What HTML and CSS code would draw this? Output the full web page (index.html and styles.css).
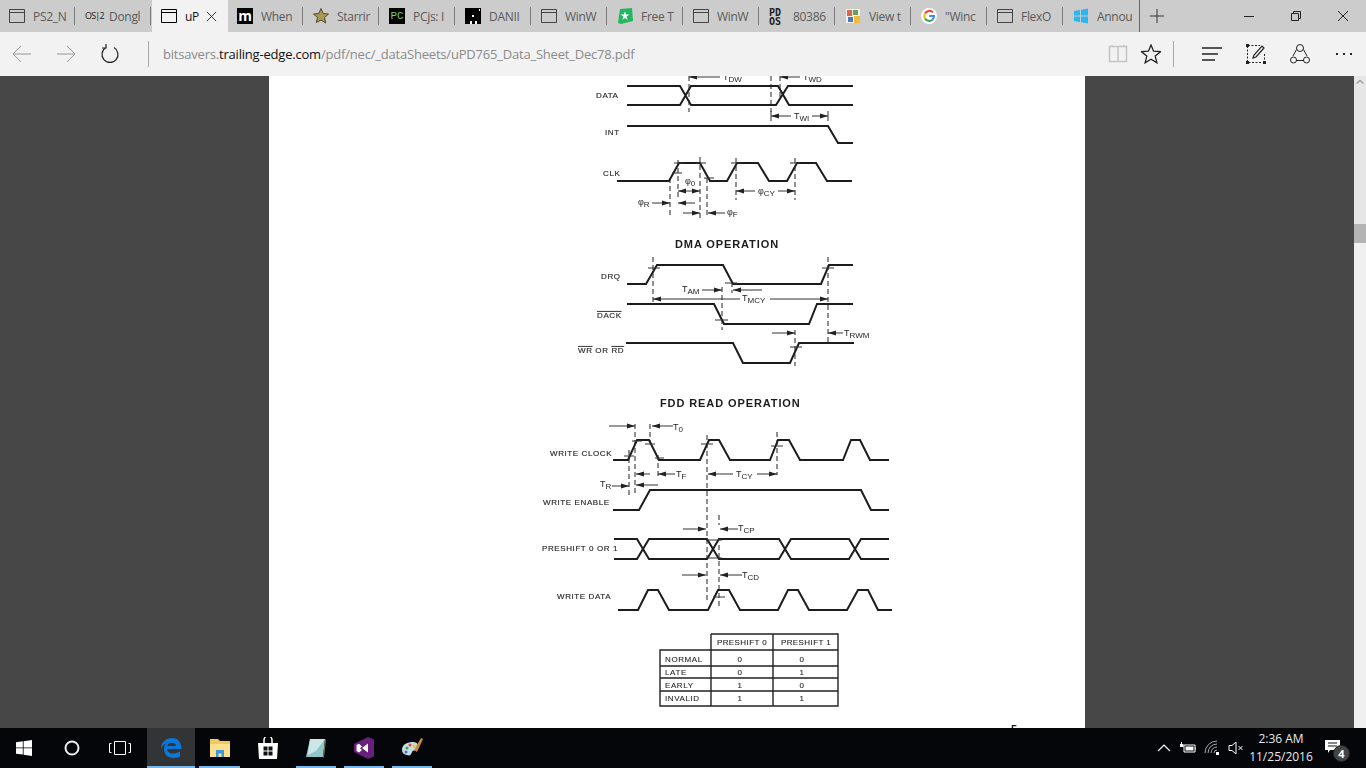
FILE: index.html
```html
<!DOCTYPE html>
<html lang="en">
<head>
  <meta charset="UTF-8" />
  <title>uPD765 Data Sheet</title>
  <link rel="stylesheet" href="styles.css">
</head>
<body>
  <svg class="sprites" width="0" height="0">
    <defs>
      <symbol id="win-icon" viewBox="0 0 16 16">
        <path d="M.5 1.500h15v13H.5zM.5 4.500h15" fill="none" stroke="currentColor" />
      </symbol>
      <marker id="head" viewBox="0 0 8 6" markerWidth="8" markerHeight="6" refX="8" refY="3" orient="auto-start-reverse" markerUnits="userSpaceOnUse">
        <path d="M0 .5L8 3L0 5.500z" fill="#222" />
      </marker>
    </defs>
  </svg>

  <div class="tabbar">
    <div class="tab"><svg class="tab-icon"><use href="#win-icon" /></svg><span class="tab-title">PS2_N</span></div>
    <div class="tab"><span class="tab-icon os2">OS|2</span><span class="tab-title">Dongl</span></div>
    <div class="tab active"><svg class="tab-icon"><use href="#win-icon" /></svg><span class="tab-title short">uP</span>
      <svg class="tab-close" viewBox="0 0 12 12"><path d="M1 1l10 10M11 1L1 11" stroke="#222" fill="none" /></svg>
    </div>
    <div class="tab"><span class="tab-icon mbox">m</span><span class="tab-title">When</span></div>
    <div class="tab">
      <svg class="tab-icon" viewBox="0 0 16 16"><path d="M8 .5l2.200 5 5.300.5-4 3.500 1.200 5.500L8 12l-4.700 2.500L4.500 9.500l-4-3.500 5.300-.5z" fill="#a89a55" stroke="#4d4a30" /></svg>
      <span class="tab-title">Starrir</span>
    </div>
    <div class="tab"><span class="tab-icon pcbox">PC</span><span class="tab-title">PCjs: I</span></div>
    <div class="tab">
      <svg class="tab-icon" viewBox="0 0 16 16"><path d="M0 0h16v16H0z" fill="#000" /><path d="M7 7h2v2H7zM5 13h2v3H5zM10 13h2v3h-2zM14 1h1v2h-1z" fill="#fff" /></svg>
      <span class="tab-title">DANII</span>
    </div>
    <div class="tab"><svg class="tab-icon"><use href="#win-icon" /></svg><span class="tab-title">WinW</span></div>
    <div class="tab">
      <svg class="tab-icon" viewBox="0 0 16 16"><path d="M3 1l12-1 1 13-12 3-3-1z" fill="#24b561" /><path d="M8 3l1 3.500h3.500l-3 2 1.200 3.500L8 10l-2.700 2 1.200-3.500-3-2H7z" fill="#fff" /></svg>
      <span class="tab-title">Free T</span>
    </div>
    <div class="tab"><svg class="tab-icon"><use href="#win-icon" /></svg><span class="tab-title">WinW</span></div>
    <div class="tab"><span class="tab-icon pdos">PD<br>OS</span><span class="tab-title">80386</span></div>
    <div class="tab">
      <svg class="tab-icon" viewBox="0 0 16 16"><path d="M1 1h14v14H1z" fill="#f4f0e6" /><path d="M2 2h5v6H2z" fill="#d9694a" /><path d="M8 2h5v5H8z" fill="#6b9e5b" /><path d="M3 9h5v5H3z" fill="#4c79b8" /><path d="M9 8h6v7H9z" fill="#eebc3c" /></svg>
      <span class="tab-title">View t</span>
    </div>
    <div class="tab">
      <svg class="tab-icon" viewBox="0 0 16 16">
        <circle cx="8" cy="8" r="8" fill="#fff" />
        <path d="M12 4.400A5 5 0 0 0 4 5.500" fill="none" stroke="#ea4335" stroke-width="2" />
        <path d="M4 5.500a5 5 0 0 0 0 5" fill="none" stroke="#fbbc05" stroke-width="2" />
        <path d="M4 10.500a5 5 0 0 0 7.500 1.200" fill="none" stroke="#34a853" stroke-width="2" />
        <path d="M11.500 11.700A5 5 0 0 0 13 8H8.200" fill="none" stroke="#4285f4" stroke-width="2" />
      </svg>
      <span class="tab-title">"Winc</span>
    </div>
    <div class="tab"><svg class="tab-icon"><use href="#win-icon" /></svg><span class="tab-title">FlexO</span></div>
    <div class="tab">
      <svg class="tab-icon" viewBox="0 0 16 16"><path d="M1 3l6-1v5.500H1zM8 1.800L15 .5v7H8zM1 8.500h6V14l-6-1zM8 8.500h7v7l-7-1.300z" fill="#2cb6f0" /></svg>
      <span class="tab-title">Annou</span>
    </div>
    <svg class="new-tab" viewBox="0 0 14 14"><path d="M7 0v14M0 7h14" stroke="#333" fill="none" /></svg>
    <div class="win-controls">
      <svg viewBox="0 0 12 12"><path d="M1 6.500h10" stroke="#222" fill="none" /></svg>
      <svg viewBox="0 0 12 12"><path d="M1.500 3.500h7v7h-7zM3.500 3.500v-2h7v7h-2" stroke="#222" fill="none" /></svg>
      <svg viewBox="0 0 12 12"><path d="M1 1l10 10M11 1L1 11" stroke="#222" fill="none" /></svg>
    </div>
  </div>

  <div class="toolbar">
    <svg class="nav-btn" viewBox="0 0 20 20"><path d="M19 10H1M9 2l-8 8 8 8" stroke="#9a9a9a" fill="none" /></svg>
    <svg class="nav-btn" viewBox="0 0 20 20"><path d="M1 10h18M11 2l8 8-8 8" stroke="#9a9a9a" fill="none" /></svg>
    <svg class="nav-btn" viewBox="0 0 20 20"><path d="M6 3.500a8 8 0 1 0 8 0M6 0v4H2" stroke="#222" stroke-width="1.200" fill="none" /></svg>
    <div class="tool-sep first"></div>
    <div class="url">bitsavers.<b>trailing-edge.com</b>/pdf/nec/_dataSheets/uPD765_Data_Sheet_Dec78.pdf</div>
    <svg class="tool-btn" viewBox="0 0 20 20"><path d="M1.500 2.500h17v15h-17zM10 2.500v15M4 1v1.500M16 1v1.500" stroke="#c4c4c4" stroke-width="1.500" fill="none" /></svg>
    <svg class="tool-btn" viewBox="0 0 20 20"><path d="M10 1l2.600 6.200 6.900.5-5.300 4.400 1.700 6.700L10 15.200l-5.900 3.600 1.700-6.700L.5 7.700l6.900-.5z" stroke="#222" stroke-width="1.300" fill="none" /></svg>
    <div class="tool-sep"></div>
    <svg class="tool-btn" viewBox="0 0 20 20"><path d="M0 4h20M0 10h16M0 16h13" stroke="#222" stroke-width="1.400" fill="none" /></svg>
    <svg class="tool-btn" viewBox="0 0 20 20"><path d="M1.500 2v16.500H16M2 1.500h12M18.500 10v7" stroke="#222" stroke-dasharray="2 1.500" fill="none" /><path d="M0 0h3v3H0zM0 17h3v3H0zM17 17h3v3h-3z" fill="#222" /><path d="M7 14l1-3 8-9 2 2-8 9z" stroke="#222" stroke-width="1.200" fill="none" /></svg>
    <svg class="tool-btn" viewBox="0 0 20 20"><path d="M6.500 5.500L3 12M13.500 5.500L17 12M6 16.500h8" stroke="#222" fill="none" /><circle cx="10" cy="4" r="3.500" fill="none" stroke="#222" /><circle cx="3.500" cy="16" r="3" fill="none" stroke="#222" /><circle cx="16.500" cy="16" r="3" fill="none" stroke="#222" /></svg>
    <svg class="tool-btn" viewBox="0 0 20 20"><path d="M2 9h2v2H2zM9 9h2v2H9zM16 9h2v2h-2z" fill="#222" /></svg>
  </div>

  <main class="viewer">
    <div class="canvas">
      <section class="sheet">
        <svg class="scan" viewBox="269 76 816 652">
          <!-- bus write timing, clipped by the top of the window -->
          <text class="lbl" x="596" y="98">DATA</text>
          <text class="lbl" x="605" y="135">INT</text>
          <text class="lbl" x="603" y="176">CLK</text>
          <path class="wave" d="M627 86H680L691 105H776L788 86H853M627 105H680L691 86H778L789 105H853" />
          <path class="wave" d="M627 126H828L838 143H853" />
          <path class="wave" d="M617 181H669L679 163H700L710 181H727L737 163H758L769 181H787L797 163H816L827 181H852" />
          <path class="dash" d="M689 76V112M771 76V112M780 76V98M670 178V218M678 160V198M700 157V218M707 178V218M736 158V200M795 158V200" />
          <path class="thin" d="M771 111V121M828 111V121M672 173H682M674 163H684M696 163H706M704 178H714M731 163H741M790 163H800" />
          <path class="arrow" d="M720 77H689" /><path class="arrow" d="M800 77H780" />
          <path class="arrow" d="M791 116H771" /><path class="arrow" d="M812 116H828" />
          <path class="arrow" d="M652 203H670" />
          <path class="arrow both" d="M678 191H700" />
          <path class="arrow" d="M695 203H678" /><path class="arrow" d="M683 213H700" /><path class="arrow" d="M725 213H708" />
          <path class="arrow" d="M755 191H736" /><path class="arrow" d="M778 191H795" />
          <text class="sym" x="723" y="80">T<tspan class="sub">DW</tspan></text>
          <text class="sym" x="803" y="80">T<tspan class="sub">WD</tspan></text>
          <text class="sym" x="794" y="119">T<tspan class="sub">WI</tspan></text>
          <text class="sym" x="638" y="205">φ<tspan class="sub">R</tspan></text>
          <text class="sym" x="685" y="184">φ<tspan class="sub">0</tspan></text>
          <text class="sym" x="727" y="215">φ<tspan class="sub">F</tspan></text>
          <text class="sym" x="758" y="194">φ<tspan class="sub">CY</tspan></text>

          <!-- DMA -->
          <text class="heading" x="675" y="248">DMA OPERATION</text>
          <text class="lbl" x="601" y="279">DRQ</text>
          <text class="lbl over" x="597" y="318">DACK</text>
          <text class="lbl" x="578" y="353"><tspan class="over">WR</tspan> OR <tspan class="over">RD</tspan></text>
          <path class="wave" d="M627 284H646L657 265H723L733 284H821L829 265H853" />
          <path class="wave" d="M627 304H714L724 324H809L817 304H853" />
          <path class="wave" d="M626 343H733L743 363H790L799 343H854" />
          <path class="dash" d="M653 257V303M722 287V330M732 282V293M828 257V342M795 330V366" />
          <path class="thin" d="M648 268H660M725 283H737M715 320H728M822 268H834M790 347H802" />
          <path class="arrow" d="M702 290H722" /><path class="arrow" d="M762 290H733" />
          <path class="arrow" d="M740 299H653" /><path class="arrow" d="M770 299H828" />
          <path class="arrow" d="M772 333H795" /><path class="arrow" d="M843 333H828" />
          <text class="sym" x="682" y="292">T<tspan class="sub">AM</tspan></text>
          <text class="sym" x="742" y="301">T<tspan class="sub">MCY</tspan></text>
          <text class="sym" x="844" y="336">T<tspan class="sub">RWM</tspan></text>

          <!-- FDD read -->
          <text class="heading" x="660" y="407">FDD READ OPERATION</text>
          <text class="lbl" x="550" y="456">WRITE CLOCK</text>
          <text class="lbl" x="543" y="505">WRITE ENABLE</text>
          <text class="lbl" x="542" y="551">PRESHIFT 0 OR 1</text>
          <text class="lbl" x="557" y="599">WRITE DATA</text>
          <path class="wave" d="M613 460H628L637 440H649L659 460H700L709 440H719L730 460H770L778 440H789L800 460H843L851 440H860L870 460H889" />
          <path class="wave" d="M613 510H639L650 490H861L871 510H889" />
          <path class="wave" d="M614 539H637L649 559H707L719 539H779L791 559H849L861 539H889" />
          <path class="wave" d="M614 559H637L649 539H707L719 559H779L791 539H849L861 559H889" />
          <path class="wave" d="M618 610H638L648 590H658L669 610H708L718 590H729L740 610H778L788 590H798L809 610H847L858 590H868L878 610H892" />
          <path class="dash" d="M629 450V495M635 424V495M650 424V443M658 455V476M707 435V600M719 515V525M719 545V606M777 432V475" />
          <path class="thin" d="M624 456H634M632 441H642M645 444H655M655 458H664M701 444H713M771 446H783M706 540H722M706 558H722M713 597H725" />
          <path class="arrow" d="M609 426H635" /><path class="arrow" d="M673 426H652" />
          <path class="arrow" d="M650 474H636" /><path class="arrow" d="M675 474H658" />
          <path class="arrow" d="M733 474H708" /><path class="arrow" d="M757 474H777" />
          <path class="arrow" d="M612 486H629" /><path class="arrow" d="M658 485H636" />
          <path class="arrow" d="M683 529H706" /><path class="arrow" d="M738 529H720" />
          <path class="arrow" d="M682 575H706" /><path class="arrow" d="M742 575H720" />
          <text class="sym" x="673" y="430">T<tspan class="sub">0</tspan></text>
          <text class="sym" x="676" y="477">T<tspan class="sub">F</tspan></text>
          <text class="sym" x="736" y="477">T<tspan class="sub">CY</tspan></text>
          <text class="sym" x="600" y="487">T<tspan class="sub">R</tspan></text>
          <text class="sym" x="738" y="531">T<tspan class="sub">CP</tspan></text>
          <text class="sym" x="742" y="578">T<tspan class="sub">CD</tspan></text>

          <!-- preshift truth table -->
          <path class="grid" d="M711 634H838V706H660V650H838M660 666H838M660 678H838M660 691H838M711 634V706M773 634V706" />
          <text class="cell" x="742" y="645">PRESHIFT 0</text>
          <text class="cell" x="806" y="645">PRESHIFT 1</text>
          <text class="row" x="665" y="662">NORMAL</text><text class="cell" x="740" y="662">0</text><text class="cell" x="802" y="662">0</text>
          <text class="row" x="665" y="675">LATE</text><text class="cell" x="740" y="675">0</text><text class="cell" x="802" y="675">1</text>
          <text class="row" x="665" y="688">EARLY</text><text class="cell" x="740" y="688">1</text><text class="cell" x="802" y="688">0</text>
          <text class="row" x="665" y="701">INVALID</text><text class="cell" x="740" y="701">1</text><text class="cell" x="802" y="701">1</text>
          <text class="heading" x="1011" y="733">5</text>
        </svg>
      </section>
    </div>
    <div class="scrollbar">
      <svg class="scroll-up" viewBox="0 0 12 12"><path d="M2.500 7.500L6 4.500l3.500 3" stroke="#a0a0a0" stroke-width="1.500" fill="none" /></svg>
      <div class="scroll-track"></div>
      <div class="scroll-thumb"></div>
      <div class="scroll-rest"></div>
    </div>
  </main>

  <footer class="taskbar">
    <div class="task-item">
      <svg class="task-icon" viewBox="0 0 16 16"><path d="M0 2.300l6.800-1v6.200H0zM7.600 1.200L16 0v7.500H7.600zM0 8.300h6.800v6.300L0 13.700zM7.600 8.300H16V16l-8.400-1.200z" fill="#fff" /></svg>
    </div>
    <div class="task-item">
      <svg class="task-icon" viewBox="0 0 16 16"><circle cx="8" cy="8" r="6.500" fill="none" stroke="#eee" stroke-width="2" /></svg>
    </div>
    <div class="task-item">
      <svg class="task-icon wide" viewBox="0 0 22 14"><path d="M5.500 .5h11v13h-11zM2.500 2.500H.5v9h2M19.500 2.500h2v9h-2" fill="none" stroke="#fff" /></svg>
    </div>
    <div class="task-item edge on">
      <svg class="task-icon big" viewBox="0 0 22 22"><path d="M1 12C1 5 6 1 12 1c6 0 9.500 4.500 9.500 11H7c.3 4.500 6.500 6 13 2.500v5c-8 3.500-16 .5-16-7.500 0-2.500 1-4.500 2.500-6C4 7 2 9 1 12zM7.200 9H16c0-4-7.800-4.500-8.800 0z" fill="#0a78d7" /></svg>
    </div>
    <div class="task-item on">
      <svg class="task-icon big" viewBox="0 0 22 22"><path d="M1 2h8l2 2h10v16H1z" fill="#f3c860" /><path d="M1 7h20v13H1z" fill="#fbe08d" /><path d="M7 13h8v7h-2.500v-3.500h-3V20H7z" fill="#3a9bdc" /></svg>
    </div>
    <div class="task-item">
      <svg class="task-icon big" viewBox="0 0 22 22"><path d="M1 6h20l-1 16H2z" fill="#fff" /><path d="M7 6V3a4 4 0 0 1 8 0v3" fill="none" stroke="#fff" stroke-width="1.500" /><path d="M6.500 9.500h4v4h-4zM11.500 9.500h4v4h-4zM6.500 14.500h4v4h-4zM11.500 14.500h4v4h-4z" fill="#111" /></svg>
    </div>
    <div class="task-item on">
      <svg class="task-icon big" viewBox="0 0 22 22"><path d="M5 2h15l-2 18H1z" fill="#8ec6cc" /><path d="M5 2h15l-9 12-8 4z" fill="#cfe6e6" /><path d="M18 20l2-18 1 1-2 18z" fill="#7a6f55" /></svg>
    </div>
    <div class="task-item on">
      <svg class="task-icon big" viewBox="0 0 22 22"><path d="M15 0l6 2.500v17L15 22 1 15V7z" fill="#68217a" /><path d="M15 6.500v9L9 11zM3.500 8l2.500-1.200 3 2.700-2 1.700 2 1.700-3 2.500L3.500 14z" fill="#fff" /></svg>
    </div>
    <div class="task-item on">
      <svg class="task-icon big" viewBox="0 0 22 22"><path d="M1 13C1 7 7 5 12 5c4 0 6 3 5 6-1 4-5 1-6 4s-2 4-5 3c-3-.5-5-2-5-5z" fill="#c7dde4" /><circle cx="6" cy="11" r="1.500" fill="#3fa54a" /><circle cx="9" cy="8" r="1.500" fill="#e2483d" /><circle cx="13" cy="9" r="1.500" fill="#f0c23b" /><circle cx="5" cy="15" r="1.500" fill="#3a76c4" /><path d="M13 13L20 1l2 1-6 13z" fill="#c98a3c" /></svg>
    </div>

    <div class="tray">
      <svg class="tray-icon" viewBox="0 0 16 16"><path d="M2 11l6-6 6 6" fill="none" stroke="#fff" stroke-width="1.200" /></svg>
      <svg class="tray-icon" viewBox="0 0 16 16"><path d="M4 5h11v7H4z" fill="none" stroke="#fff" /><path d="M5.500 6.500h8v4h-8zM15.500 7h.5v3h-.5zM0 4h3.500v3H0zM1 2h1v2H1z" fill="#fff" /></svg>
      <svg class="tray-icon" viewBox="0 0 16 16"><path d="M1 13a12 12 0 0 1 12-12M4 13a9 9 0 0 1 9-9M7 13a6 6 0 0 1 6-6M10 13a3 3 0 0 1 3-3" fill="none" stroke="#aaa" /><path d="M12 12h3v3h-3z" fill="#fff" /></svg>
      <svg class="tray-icon" viewBox="0 0 16 16"><path d="M1 5.500h3L8 2v12L4 10.500H1zM10.500 6l4 4M14.500 6l-4 4" fill="none" stroke="#fff" /></svg>
      <div class="clock"><span>2:36 AM</span><span>11/25/2016</span></div>
      <div class="notify">
        <svg class="notify-icon" viewBox="0 0 16 16"><path d="M0 1h15v10H5l-2 3v-3H0z" fill="#fff" /><path d="M3 4h9M3 7h9" stroke="#111" /></svg>
        <span class="badge">4</span>
      </div>
    </div>
  </footer>
</body>
</html>
```

FILE: styles.css
```css
* {
  box-sizing: border-box;
}
html, body {
  height: 100%;
}
body {
  margin: 0;
  display: flex;
  flex-direction: column;
  height: 768px;
  overflow: hidden;
  font-family: "Open Sans", "Noto Sans", sans-serif;
  background-color: #474747;
}
.sprites {
  position: absolute;
}

/* tab strip */
.tabbar {
  display: flex;
  height: 32px;
  flex: none;
  background-color: #cccccc;
}
.tab {
  position: relative;
  display: flex;
  align-items: center;
  width: 76px;
  height: 32px;
  flex: none;
  padding-left: 9px;
}
.tab::after {
  content: "";
  position: absolute;
  right: 1px;
  top: 7px;
  width: 1px;
  height: 18px;
  background-color: #7d7d7d;
}
.tab:nth-child(15)::after {
  right: 0;
  top: 0;
  height: 32px;
  background-color: #666666;
}
.tab.active {
  background-color: #f2f2f2;
}
.tab.active::after {
  display: none;
}
.tab.active .tab-icon {
  color: #000000;
}
.tab-icon {
  width: 16px;
  height: 16px;
  flex: none;
  color: #444444;
}
.tab-title {
  width: 36px;
  margin-left: 8px;
  overflow: hidden;
  white-space: nowrap;
  font-size: 12px;
  letter-spacing: -.3px;
  color: #5a5a5a;
}
.tab-title.short {
  width: 16px;
  color: #111111;
}
.tab-close {
  width: 11px;
  height: 11px;
  margin-left: 5px;
}
.os2 {
  font-size: 9px;
  line-height: 16px;
  letter-spacing: -.8px;
  white-space: nowrap;
  color: #222222;
}
.mbox {
  background-color: #000000;
  color: #ffffff;
  font-size: 14px;
  font-weight: 700;
  line-height: 15px;
  text-align: center;
}
.pcbox {
  background-color: #000000;
  color: #6fd06f;
  font-family: "Liberation Mono", monospace;
  font-size: 11px;
  line-height: 16px;
  text-align: center;
}
.pdos {
  font-family: "DejaVu Sans Mono", monospace;
  font-size: 10px;
  font-weight: 700;
  line-height: 9px;
  color: #222222;
}
.new-tab {
  width: 14px;
  height: 14px;
  margin: 9px 0 0 10px;
}
.win-controls {
  display: flex;
  gap: 35px;
  margin-left: auto;
  padding: 10px 17px 0 0;
}
.win-controls svg {
  width: 12px;
  height: 12px;
}

/* address bar */
.toolbar {
  display: flex;
  align-items: center;
  height: 44px;
  flex: none;
  padding: 0 12px 0 12px;
  background-color: #f2f2f2;
}
.nav-btn {
  width: 20px;
  height: 20px;
  margin-right: 24px;
}
.tool-sep {
  width: 1px;
  height: 26px;
  margin: 0 28px 0 12px;
  background-color: #a8a8a8;
}
.tool-sep.first {
  margin: 0 14px 0 4px;
}
.url {
  flex: 1;
  font-size: 13px;
  letter-spacing: -.2px;
  color: #8a8a8a;
}
.url b {
  font-weight: 400;
  color: #111111;
}
.tool-btn {
  width: 20px;
  height: 20px;
  margin-left: 13px;
}
.tool-btn:nth-last-child(-n+4) {
  margin-left: 0;
  margin-right: 24px;
}
.tool-btn:last-child {
  margin-right: 0;
}

/* pdf viewer */
.viewer {
  display: flex;
  flex: 1;
  min-height: 0;
}
.canvas {
  flex: 1;
  display: flex;
  justify-content: center;
  overflow: hidden;
}
.sheet {
  width: 816px;
  height: 652px;
  background-color: #ffffff;
  overflow: hidden;
}
.scan {
  display: block;
  width: 816px;
  height: 652px;
  filter: blur(.35px);
}
.scan text {
  font-family: "Liberation Sans", Arial, sans-serif;
  fill: #1c1c1c;
}
.scan .lbl {
  font-size: 8px;
  letter-spacing: .6px;
  stroke: #333333;
  stroke-width: .15px;
}
.scan .over {
  text-decoration: overline;
}
.scan .sym {
  font-size: 9px;
}
.scan .sub {
  font-size: 8px;
  baseline-shift: -2px;
}
.scan .heading {
  font-size: 11px;
  font-weight: 700;
  letter-spacing: .9px;
}
.scan .cell {
  font-size: 8px;
  letter-spacing: .4px;
  text-anchor: middle;
  stroke: #333333;
  stroke-width: .1px;
}
.scan .row {
  font-size: 8px;
  letter-spacing: .6px;
  stroke: #333333;
  stroke-width: .1px;
}
.wave {
  fill: none;
  stroke: #1c1c1c;
  stroke-width: 2;
}
.dash {
  fill: none;
  stroke: #222222;
  stroke-dasharray: 5 3;
}
.thin {
  fill: none;
  stroke: #333333;
}
.arrow {
  fill: none;
  stroke: #333333;
  marker-end: url(#head);
}
.arrow.both {
  marker-start: url(#head);
}
.grid {
  fill: none;
  stroke: #222222;
  stroke-width: 1.400;
}

/* scrollbar */
.scrollbar {
  display: flex;
  flex-direction: column;
  width: 12px;
  flex: none;
}
.scroll-up {
  width: 12px;
  height: 12px;
  flex: none;
  background-color: #e6e6e6;
}
.scroll-track {
  height: 136px;
  flex: none;
  background-color: #e6e6e6;
}
.scroll-thumb {
  height: 19px;
  flex: none;
  background-color: #b4b4b4;
}
.scroll-rest {
  flex: 1;
  background-color: #f0f0f0;
}

/* windows taskbar */
.taskbar {
  display: flex;
  height: 40px;
  flex: none;
  background-color: #04060a;
}
.task-item {
  position: relative;
  display: flex;
  align-items: center;
  justify-content: center;
  width: 48px;
  height: 40px;
  flex: none;
}
.task-item:nth-child(5) {
  width: 49px;
}
.task-item.on::after {
  content: "";
  position: absolute;
  left: 4px;
  right: 4px;
  bottom: 0;
  height: 2px;
  background-color: #76b9ed;
}
.task-item.edge {
  background-color: #333436;
  margin-left: 3px;
}
.task-item.edge::after {
  left: 0;
  right: 0;
}
.task-icon {
  width: 16px;
  height: 16px;
}
.task-icon.wide {
  width: 22px;
  height: 14px;
}
.task-icon.big {
  width: 22px;
  height: 22px;
}
.tray {
  display: flex;
  align-items: center;
  margin-left: auto;
  padding-right: 2px;
  color: #ffffff;
}
.tray-icon {
  width: 16px;
  height: 16px;
  margin-right: 8px;
}
.clock {
  display: flex;
  flex-direction: column;
  align-items: center;
  width: 64px;
  margin-left: -3px;
  font-size: 12px;
  line-height: 18px;
  color: #e8e8e8;
}
.notify {
  position: relative;
  width: 28px;
  height: 28px;
  margin-left: 12px;
  margin-right: 11px;
}
.notify-icon {
  width: 16px;
  height: 16px;
  margin-top: 5px;
}
.badge {
  position: absolute;
  left: 8px;
  top: 11px;
  width: 17px;
  height: 17px;
  border-radius: 50%;
  background-color: #444444;
  border: 1px solid #222222;
  font-size: 11px;
  font-weight: 700;
  line-height: 15px;
  text-align: center;
}
```
